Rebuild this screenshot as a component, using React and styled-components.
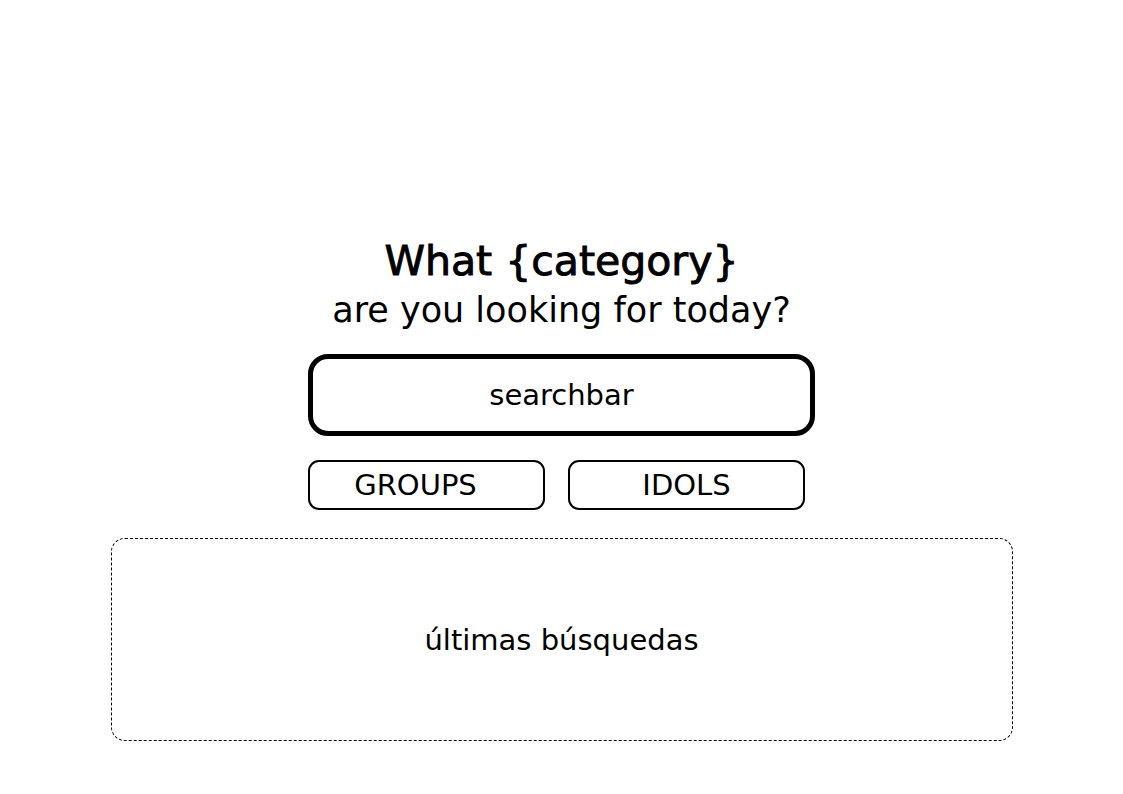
import styled, { createGlobalStyle } from "styled-components";

const GlobalStyle = createGlobalStyle`
  html, body {
    margin: 0;
    padding: 0;
    background: #fff;
  }
  body {
    font-family: "DejaVu Sans", Verdana, sans-serif;
    color: #000;
  }
`;

const Page = styled.main`
  width: 1123px;
  height: 794px;
  display: flex;
  flex-direction: column;
  align-items: center;
  padding-top: 237px;
  box-sizing: border-box;
`;

const Title = styled.h1`
  margin: 0;
  font-size: 41px;
  font-weight: 400;
  line-height: 48px;
  -webkit-text-stroke: 0.9px #000;
  text-align: center;
`;

const Subtitle = styled.p`
  margin: 3px 0 0;
  font-size: 35px;
  line-height: 44px;
  text-align: center;
`;

const SearchBar = styled.div`
  margin-top: 22px;
  width: 507px;
  height: 82px;
  box-sizing: border-box;
  border: 5px solid #000;
  border-radius: 20px;
  display: flex;
  align-items: center;
  justify-content: center;
  font-size: 29px;
`;

const Filters = styled.div`
  margin-top: 24px;
  width: 507px;
  display: flex;
  gap: 23px;
`;

const FilterButton = styled.button`
  width: 237px;
  height: 50px;
  box-sizing: border-box;
  border: 2px solid #000;
  border-radius: 11px;
  background: #fff;
  color: #000;
  font-family: inherit;
  font-size: 29px;
  padding: 0 ${(p) => p.$shift || 0}px 0 0;
  display: flex;
  align-items: center;
  justify-content: center;
`;

const Recent = styled.section`
  margin-top: 28px;
  width: 902px;
  height: 203px;
  box-sizing: border-box;
  border: 1px dashed #000;
  border-radius: 14px;
  display: flex;
  align-items: center;
  justify-content: center;
  font-size: 29px;
`;

export default function App() {
  return (
    <>
      <GlobalStyle />
      <Page>
        <Title>What {"{category}"}</Title>
        <Subtitle>are you looking for today?</Subtitle>
        <SearchBar>searchbar</SearchBar>
        <Filters>
          <FilterButton $shift={22}>GROUPS</FilterButton>
          <FilterButton>IDOLS</FilterButton>
        </Filters>
        <Recent>últimas búsquedas</Recent>
      </Page>
    </>
  );
}
